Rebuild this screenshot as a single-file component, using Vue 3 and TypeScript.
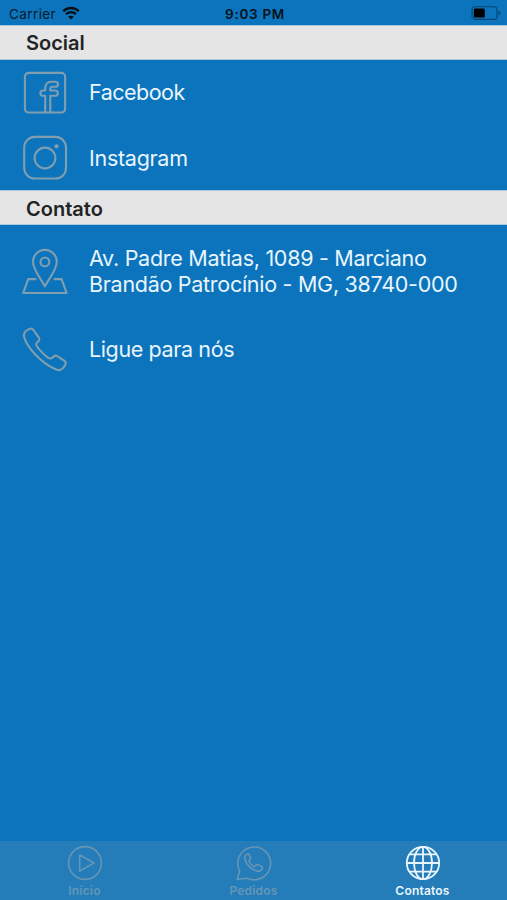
<script setup lang="ts">
import { ref } from 'vue'

type TabId = 'inicio' | 'pedidos' | 'contatos'

const tabs: { id: TabId; label: string }[] = [
  { id: 'inicio', label: 'Início' },
  { id: 'pedidos', label: 'Pedidos' },
  { id: 'contatos', label: 'Contatos' },
]
const active = ref<TabId>('contatos')
</script>

<template>
  <div class="screen">
    <header class="status">
      <div class="carrier">
        <span class="carrier-name">Carrier</span>
        <svg class="wifi" viewBox="0 0 18 14" width="18" height="14">
          <path d="M1.2 5.2C5.5.9 12.5.9 16.8 5.2M4 8.1c2.8-2.7 7.2-2.7 10 0" fill="none" stroke="#061018" stroke-width="2.3" />
          <path d="M9 13.6 6.2 10.8c1.5-1.5 4.1-1.5 5.6 0z" fill="#061018" />
        </svg>
      </div>
      <span class="time">9:03 PM</span>
      <svg class="battery" viewBox="0 0 30 14" width="30" height="14">
        <rect x="1" y=".8" width="25" height="12.6" rx="3.2" fill="none" stroke="#07436e" stroke-width="1.1" />
        <rect x="2.8" y="2.6" width="11" height="9" rx="1.4" fill="#000" />
        <path d="M27.6 4.8c2.2.8 2.2 3.8 0 4.6z" fill="#07436e" />
      </svg>
    </header>

    <main>
      <h2 class="section">Social</h2>
      <ul class="list">
        <li class="row">
          <svg class="icon" viewBox="0 0 46 46">
            <rect x="2.9" y="2.9" width="40.2" height="39.6" rx="3.8" />
            <path d="M23.2 42.4V25.8H21a2 2 0 0 1 0-5.3h2.2v-2.2c0-4.6 2.6-6.6 6.5-6.6h3.8a2.2 2.2 0 0 1 0 5h-3c-1.5 0-2.2.8-2.2 2.1v1.7h4.9a2.6 2.6 0 0 1 0 5.3h-4.9v16.6" />
          </svg>
          <span class="text facebook">Facebook</span>
        </li>
        <li class="row">
          <svg class="icon" viewBox="0 0 46 46">
            <rect x="2.2" y="1.9" width="41.8" height="41.6" rx="10.5" />
            <circle cx="23" cy="23" r="10.4" />
            <circle cx="34.5" cy="11.3" r="2.1" class="dot" />
          </svg>
          <span class="text instagram">Instagram</span>
        </li>
      </ul>

      <h2 class="section contact">Contato</h2>
      <ul class="list">
        <li class="row address-row">
          <svg class="icon" viewBox="0 0 46 46">
            <path d="M22.9 38.4C19.8 31.8 11 22.2 11 13.8a11.9 11.9 0 0 1 23.8 0c0 8.4-8.8 18-11.9 24.6z" />
            <circle cx="22.9" cy="13.9" r="4.4" />
            <path d="M13.4 31.1H6.2L1.2 45h43.4l-5-13.9h-7.1" />
          </svg>
          <span class="text address">
            <span>Av. Padre Matias, 1089 - Marciano</span><br />
            <span>Brandão Patrocínio - MG, 38740-000</span>
          </span>
        </li>
        <li class="row">
          <svg class="icon" viewBox="0 0 46 46">
            <path d="M8.1 2.7C5 3.7 1.5 6.1 2 10.2c1.1 5.1 5.3 11.8 11.3 18.3 6.8 7.2 14.8 12.6 21.6 15.2 4.4 1.6 7.4-2.2 8.8-6.1.5-1.6-.4-2.3-1.5-3l-7-4.4c-1.2-.7-2.5-.6-3.4.3-1.2 1.4-2.4 2.3-4 2-3.4-.9-13-10.8-13.5-13.9-.3-1.8 1.5-2.8 2.6-4 .8-.9.8-1.8.2-2.8L11.2 3.7C10.4 2.7 9.4 2.2 8.1 2.7z" />
          </svg>
          <span class="text call">Ligue para nós</span>
        </li>
      </ul>
    </main>

    <nav class="tabs">
      <button v-for="tab in tabs" :key="tab.id" class="tab" :class="[tab.id, { active: active === tab.id }]" @click="active = tab.id">
        <svg class="tab-icon" viewBox="0 0 36 36">
          <template v-if="tab.id === 'inicio'">
            <circle cx="18" cy="18" r="16.4" />
            <path d="M12.7 10v16L27 18z" />
          </template>
          <template v-else-if="tab.id === 'pedidos'">
            <path d="M1.3 34.5 3.6 25.8A16.4 16.4 0 1 1 11.2 33.2C8.4 33.1 5 34.2 1.3 34.5z" />
            <path d="M11.6 9.1c-2.1.8-3.1 2.5-2.7 4.8 1 5.7 7.5 11.6 13 12.2 2.2.2 4.1-1.1 4.5-3.2.1-.7-.2-1.1-.7-1.4l-3.7-1.9c-.6-.3-1.1-.2-1.5.2l-1.2 1.4c-.5.5-1 .4-1.5.1-2.2-1.2-3.7-2.8-4.7-4.8-.3-.6-.2-1 .2-1.5l1-1.2c.4-.4.4-.8.2-1.3L13 9.6c-.3-.6-.8-.7-1.4-.5z" />
          </template>
          <template v-else>
            <circle cx="18" cy="18" r="16.2" />
            <ellipse cx="18" cy="18" rx="9" ry="16.2" />
            <path d="M18 1.8v32.4M1.8 18h32.4M4.2 9.4h27.6M4.2 26.6h27.6" />
          </template>
        </svg>
        <span class="tab-label">{{ tab.label }}</span>
      </button>
    </nav>
  </div>
</template>

<style>
body {
  margin: 0;
  background: #0b74bc;
}
</style>

<style scoped>
.screen {
  display: flex;
  flex-direction: column;
  width: 100%;
  height: 900px;
  overflow: hidden;
  background: #0b74bc;
  font-family: Inter, Roboto, sans-serif;
}
.status {
  display: grid;
  grid-template-columns: 1fr auto 1fr;
  align-items: center;
  box-sizing: border-box;
  height: 25px;
  padding: 2px 6px 0 9px;
  color: #061a29;
  font-size: 13.5px;
  line-height: 24px;
}
.carrier {
  display: flex;
  align-items: center;
  gap: 6px;
}
.carrier-name {
  letter-spacing: 0.4px;
}
.wifi {
  margin-top: -2px;
}
.time {
  color: #061018;
  font-weight: 600;
  letter-spacing: 0.7px;
}
.battery {
  justify-self: end;
  margin-top: -2px;
}
main {
  flex: 1;
}
.section {
  box-sizing: border-box;
  height: 35px;
  margin: 0;
  padding: 1px 26px 0;
  border-top: 1px solid #a9c9e0;
  border-bottom: 1px solid #a9c9e0;
  background: #e5e5e5;
  color: #222426;
  font-size: 20px;
  font-weight: 600;
  line-height: 33px;
}
.section.contact {
  padding-top: 2px;
  line-height: 32px;
}
.list {
  margin: 0;
  padding: 0;
  list-style: none;
}
.row {
  display: flex;
  align-items: center;
  box-sizing: border-box;
  height: 65px;
  padding-left: 22px;
  color: #e9f5fd;
}
.address-row {
  height: 91px;
}
.icon {
  flex: none;
  width: 46px;
  height: 46px;
  margin-right: 21px;
  fill: none;
  stroke: #819eaf;
  stroke-width: 2.1;
  stroke-linejoin: round;
  stroke-linecap: round;
}
.icon .dot {
  fill: #819eaf;
  stroke: none;
}
.text {
  font-size: 21.5px;
  line-height: 26px;
  letter-spacing: -0.28px;
  white-space: nowrap;
}
.facebook {
  padding-bottom: 2px;
  letter-spacing: -0.5px;
}
.call {
  letter-spacing: -0.38px;
}
.tabs {
  display: grid;
  grid-template-columns: repeat(3, 1fr);
  height: 59px;
  background: #247db9;
}
.tab {
  display: flex;
  flex-direction: column;
  align-items: center;
  padding: 4px 0 0;
  border: 0;
  background: none;
  color: #6596b5;
  font: 600 12px/16px Inter, Roboto, sans-serif;
  letter-spacing: 0.2px;
}
.tab.active {
  color: #e9f5fd;
}
.tab-icon {
  width: 36px;
  height: 36px;
  margin-bottom: 2px;
  fill: none;
  stroke: currentColor;
  stroke-width: 1.6;
  stroke-linejoin: round;
}
.active .tab-icon {
  stroke-width: 1.8;
}
</style>
